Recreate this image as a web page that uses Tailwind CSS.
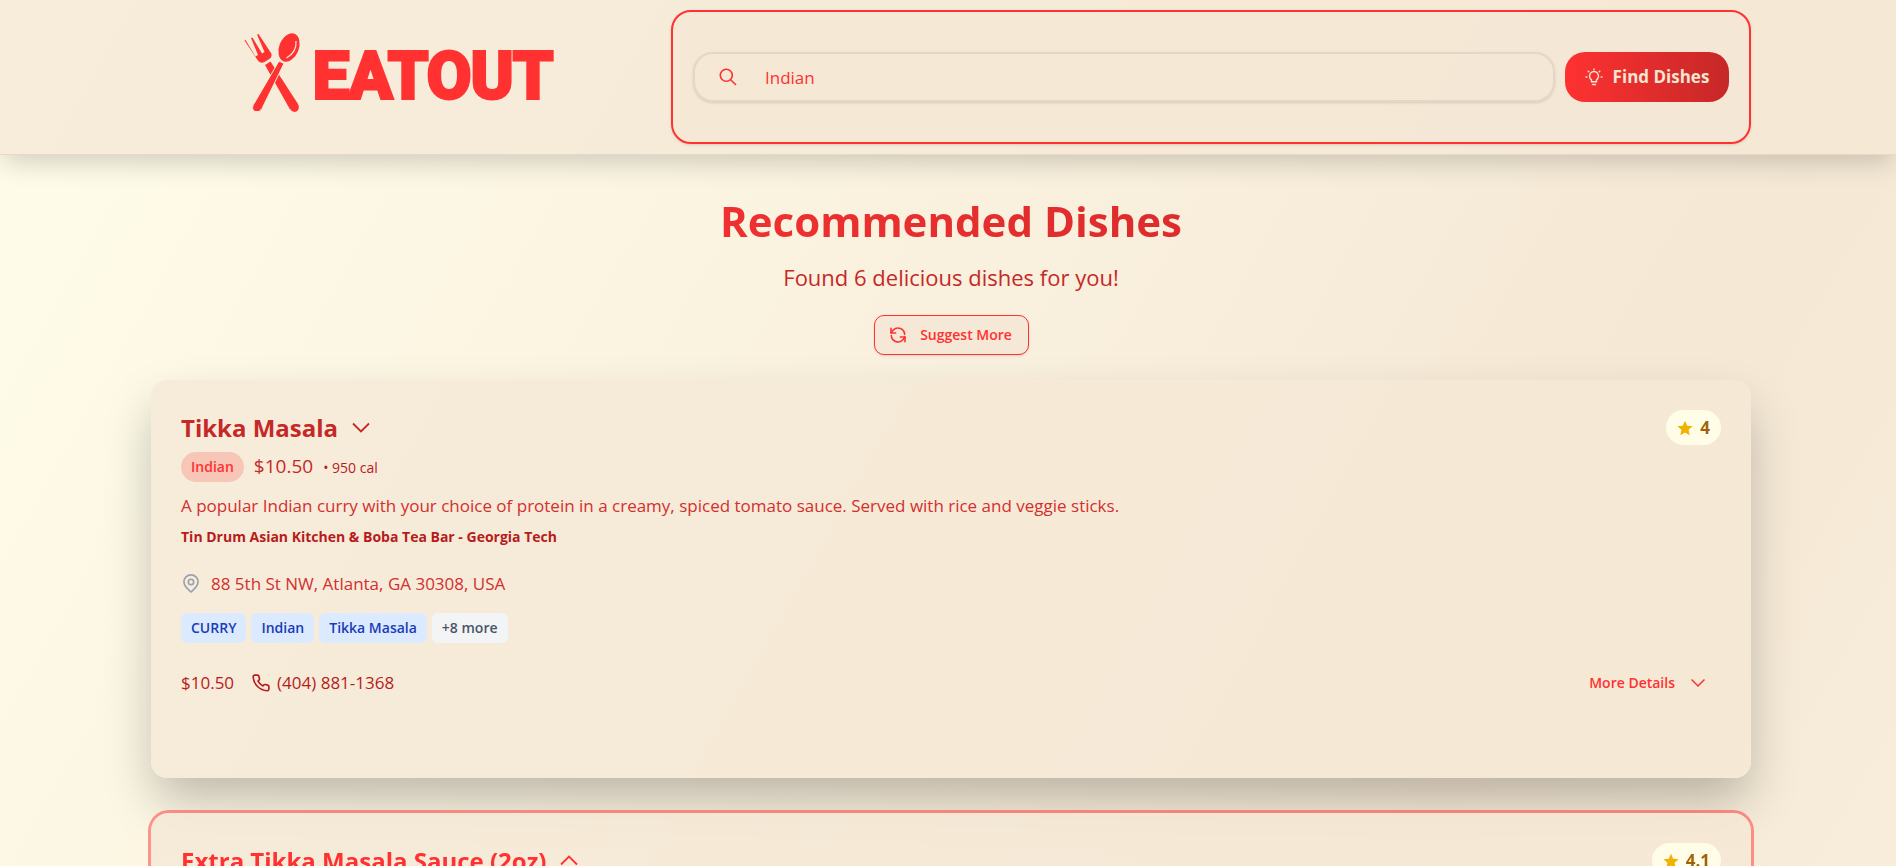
<!DOCTYPE html>
<html lang="en">
<head>
    <meta charset="UTF-8">
    <meta name="viewport" content="width=device-width, initial-scale=1.0">
    <title>EatOut</title>
    <script src="https://cdn.jsdelivr.net/npm/@tailwindcss/browser@4"></script>
</head>
<body class="h-screen overflow-hidden font-['Open_Sans','Noto_Sans',sans-serif] text-[17px] leading-7 text-[#c62828] bg-no-repeat bg-[length:100%_3370px] bg-[linear-gradient(to_bottom_right,#fffdea,#f5e8d5,#fffdea)]">

    <header class="relative border-b border-[#e8d9c6] bg-[#f5e8d6]/80 shadow-[0_10px_25px_-3px_rgba(0,0,0,0.18)] pl-1.5">
        <div class="max-w-[1600px] mx-auto py-2.5 flex items-center">
            <a href="#" class="w-[520px] shrink-0 flex items-center pl-[92px]" aria-label="EatOut home">
                <svg class="w-16 h-[86px] shrink-0 overflow-visible" viewBox="0 7 64 86" fill="#ff3131">
                    <!-- fork -->
                    <path d="M2.500 13 L12.500 29.500 L15 28 L8 11 L9.500 10.500 L19 26.500 L21.500 25 L14 7.500 L15.500 7 L28 26 Q29.500 29 27 31.500 L21.500 35 Q17 37 14.500 33 L1.500 13.500 Z"/>
                    <path d="M22 38 L27.500 34.500 L55 77 Q57.500 82 53.500 84.500 Q49.500 86 46.500 81.500 Z"/>
                    <!-- spoon -->
                    <path d="M36 34 L41 36.500 L19 81.500 Q16.500 86 12 84.500 Q8 82.500 10.500 77.500 Z" stroke="#f6ebdb" stroke-width="1"/>
                    <ellipse cx="46" cy="20.500" rx="9.800" ry="14.800" transform="rotate(22 46 20.500)"/>
                    <path d="M53 14 Q54 25 43.500 31" fill="none" stroke="#f6ebdb" stroke-width="1.200"/>
                </svg>
                <span class="pl-1.5 font-['Roboto',sans-serif] font-bold text-[64px] leading-[86px] text-[#ff3131] [-webkit-text-stroke:4px_#ff3131]">EATOUT</span>
            </a>
            <form class="flex-1 flex items-center gap-2.5 rounded-[20px] border-2 border-[#ff3131] bg-[#f5e6d3]/60 px-5 py-10 shadow-sm">
                <div class="flex-1 h-[50px] flex items-center rounded-[20px] border-2 border-[#e6d6c4] shadow-sm pl-6">
                    <label for="dish" aria-label="Dish">
                        <svg class="w-[18px] h-[18px] text-[#ff3131]" viewBox="0 0 18 18" fill="none" stroke="currentColor" stroke-width="1.600"><circle cx="7.300" cy="7.300" r="6"/><path d="M11.700 11.700l5.300 5.300"/></svg>
                    </label>
                    <input id="dish" type="text" value="Indian" class="flex-1 pl-7 pt-0.5 text-[#ff3131] bg-transparent outline-none">
                </div>
                <button type="button" class="w-[164px] h-[50px] flex items-center justify-center gap-2.5 rounded-[20px] bg-linear-to-r from-[#ff3131] to-[#c62828] text-[#f5e6d3] font-bold">
                    <svg class="w-[18px] h-[18px] shrink-0" viewBox="0 0 18 18" fill="none" stroke="currentColor" stroke-width="1.400" stroke-linecap="round">
                        <path d="M6.500 13.800v-2a4.500 4.500 0 1 1 5 0v2zM7.500 16.500h3M9 1v.8M3.200 3.200l.6.6M14.800 3.200l-.6.600M1 9h.8M16.200 9h.8"/>
                    </svg>
                    Find Dishes
                </button>
            </form>
        </div>
    </header>

    <main class="pl-1.5">
        <div class="max-w-[1600px] mx-auto">
            <div class="flex flex-col items-center pt-[34px]">
                <h1 class="text-[42px] leading-[64px] font-bold bg-linear-to-r from-[#f03030] to-[#dc2c2c] bg-clip-text text-transparent">Recommended Dishes</h1>
                <p class="mt-2 text-[22px] leading-8">Found 6 delicious dishes for you!</p>
                <button type="button" class="mt-[22px] w-[155px] h-10 flex items-center justify-center gap-3.5 rounded-[10px] border border-[#ff3131] bg-[#f5e8d6] text-[#ff3131] text-sm font-semibold shadow-sm">
                    <svg class="w-4 h-4" viewBox="0 0 24 24" fill="none" stroke="currentColor" stroke-width="2.400" stroke-linecap="round" stroke-linejoin="round">
                        <path d="M1.500 2v7h7M22.500 22v-7h-7"/>
                        <path d="M22 11A10 10 0 0 0 5 4.500L1.500 9M2 13a10 10 0 0 0 17 6.500l3.500-4.500"/>
                    </svg>
                    Suggest More
                </button>
            </div>

            <article class="mt-[25px] rounded-2xl bg-[#f5e8d6]/80 px-[30px] pt-[30px] pb-[81px] shadow-[0_25px_50px_-4px_rgba(0,0,0,0.25)]">
                <div class="flex justify-between items-start">
                    <div>
                        <h2 class="flex items-center gap-3.5 text-2xl leading-9 font-bold">
                            Tikka Masala
                            <svg class="w-[18px] h-[18px]" viewBox="0 0 18 18" fill="none" stroke="currentColor" stroke-width="1.800"><path d="M1 4.500l8 8 8-8"/></svg>
                        </h2>
                        <div class="mt-1.5 h-[30px] flex items-center">
                            <span class="h-[30px] px-2.5 rounded-full bg-[#ff3131]/20 text-[#ff3131] text-sm leading-[30px] font-semibold">Indian</span>
                            <span class="ml-2.5 pb-0.5 text-[19px]">$10.50</span>
                            <span class="ml-2.5 pt-0.5 text-sm text-[#b71c1c]">• 950 cal</span>
                        </div>
                    </div>
                    <span class="h-[35px] px-[11px] flex items-center gap-[7px] rounded-full bg-[#fffde7] text-[#a16207] font-bold">
                        <svg class="w-4 h-4" viewBox="0 0 20 20" fill="#f0b100"><path d="M10 1l2.700 6.200 6.800.6-5.100 4.500 1.500 6.700L10 15.500 4.100 19l1.500-6.700L.5 7.800l6.800-.6z"/></svg>
                        4
                    </span>
                </div>
                <p class="mt-2.5 text-[#d32f2f]">A popular Indian curry with your choice of protein in a creamy, spiced tomato sauce. Served with rice and veggie sticks.</p>
                <p class="mt-1.5 text-sm leading-[22px] font-bold text-[#b71c1c]">Tin Drum Asian Kitchen &amp; Boba Tea Bar - Georgia Tech</p>
                <address class="mt-[22px] flex items-center gap-2.5 not-italic text-[#d32f2f]">
                    <svg class="w-5 h-5" viewBox="0 0 24 24" fill="none" stroke="#99a1af" stroke-width="2" stroke-linejoin="round"><path d="M12 21.500C8 18 3.500 14.500 3.500 9.500a8.500 8.500 0 0 1 17 0c0 5-4.500 8.500-8.500 12z"/><circle cx="12" cy="9.500" r="3.200"/></svg>
                    88 5th St NW, Atlanta, GA 30308, USA
                </address>
                <div class="mt-[15px] flex gap-[5px] text-sm leading-[30px] font-semibold text-[#193cb8]">
                    <span class="px-2.5 rounded-md bg-[#dbeafe]">CURRY</span>
                    <span class="px-2.5 rounded-md bg-[#dbeafe]">Indian</span>
                    <span class="px-2.5 rounded-md bg-[#dbeafe]">Tikka Masala</span>
                    <span class="px-2.5 rounded-md bg-[#f3f4f6] text-[#4a5565]">+8 more</span>
                </div>
                <div class="mt-[26px] flex items-center text-[#b71c1c]">
                    <span>$10.50</span>
                    <a href="tel:4048811368" class="ml-[18px] flex items-center gap-[7px]">
                        <svg class="w-[18px] h-[18px]" viewBox="0 0 24 24" fill="none" stroke="currentColor" stroke-width="2.200" stroke-linejoin="round"><path d="M22.500 17v3a2.200 2.200 0 0 1-2.300 2.300A19.800 19.800 0 0 1 1.500 4 2.200 2.200 0 0 1 3.700 1.500h3.500a2 2 0 0 1 2 1.700c.1 1 .4 1.900.7 2.800a2 2 0 0 1-.5 2.100L8 9.500a16 16 0 0 0 6.500 6.500l1.400-1.400a2 2 0 0 1 2.100-.5c.9.3 1.800.6 2.800.7a2 2 0 0 1 1.700 2.200z"/></svg>
                        (404) 881-1368
                    </a>
                    <button type="button" class="ml-auto mr-4 flex items-center gap-4 text-sm font-semibold text-[#ff3131]">
                        More Details
                        <svg class="w-[14px] h-[14px]" viewBox="0 0 14 14" fill="none" stroke="currentColor" stroke-width="1.500"><path d="M0.500 3.500l6.500 6.500 6.500-6.500"/></svg>
                    </button>
                </div>
            </article>

            <article class="relative mt-[35px] rounded-[18px] bg-[#f5e8d6]/80 backdrop-blur-sm px-[30px] py-[30px] ring-3 ring-[#ff3131]/50">
                <div class="flex justify-between items-start">
                    <h2 class="flex items-center gap-3.5 text-2xl leading-9 font-bold text-[#ff3131]">
                        Extra Tikka Masala Sauce (2oz)
                        <svg class="w-[18px] h-[18px]" viewBox="0 0 18 18" fill="none" stroke="currentColor" stroke-width="1.800"><path d="M1 12.500l8-8 8 8"/></svg>
                    </h2>
                    <span class="h-[35px] px-[11px] flex items-center gap-[7px] rounded-full bg-[#fffde7] text-[#a16207] font-bold">
                        <svg class="w-4 h-4" viewBox="0 0 20 20" fill="#f0b100"><path d="M10 1l2.700 6.200 6.800.6-5.100 4.500 1.500 6.700L10 15.500 4.100 19l1.500-6.700L.5 7.800l6.800-.6z"/></svg>
                        4.1
                    </span>
                </div>
            </article>
        </div>
    </main>

</body>
</html>
